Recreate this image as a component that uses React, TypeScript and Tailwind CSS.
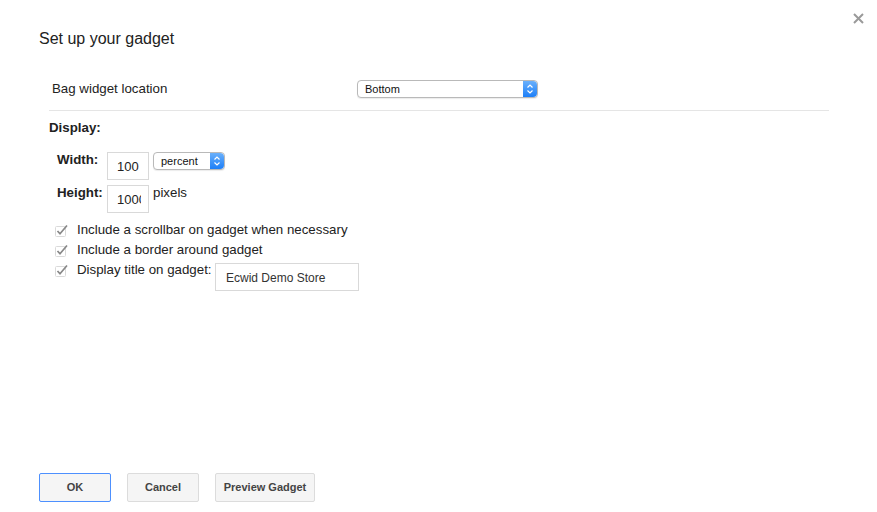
import React from "react";

function Stepper() {
  return (
    <div className="flex h-full w-[14px] items-center justify-center rounded-r-[4px] bg-[linear-gradient(#6ab0fb,#1d7ff8)]">
      <svg width="8" height="12" viewBox="0 0 8 12" aria-hidden="true">
        <path d="M1.5 4.5 L4 2 L6.5 4.5" fill="none" stroke="#fff" strokeWidth="1.2" />
        <path d="M1.5 7.5 L4 10 L6.5 7.5" fill="none" stroke="#fff" strokeWidth="1.2" />
      </svg>
    </div>
  );
}

function MacSelect({ value, width }: { value: string; width: string }) {
  return (
    <div
      className={`flex h-[18px] items-center rounded-[4px] border border-[#b9b9b9] bg-white shadow-[0_1px_1px_rgba(0,0,0,0.08)] ${width}`}
    >
      <span className="flex-1 pl-[7px] text-[11px] leading-none text-[#111]">{value}</span>
      <Stepper />
    </div>
  );
}

function Check() {
  return (
    <svg width="14" height="13" viewBox="0 0 14 13" aria-hidden="true" className="shrink-0">
      <rect x="0.5" y="2.5" width="10" height="10" rx="1" fill="#fff" stroke="#dadada" />
      <path d="M2.5 7 L5 9.8 L12 1.5" fill="none" stroke="#888" strokeWidth="1.7" />
    </svg>
  );
}

function Button({ label, primary, width }: { label: string; primary?: boolean; width: string }) {
  return (
    <button
      className={`h-[29px] rounded-[2px] border bg-[#f5f5f5] text-[11px] font-bold text-[#444] ${width} ${
        primary ? "border-[#4d90fe]" : "border-[#dcdcdc]"
      }`}
    >
      {label}
    </button>
  );
}

export default function App() {
  return (
    <div className="relative flex h-[512px] w-[877px] flex-col bg-white font-['Liberation_Sans',Arial,sans-serif] text-[#222]">
      {/* close */}
      <button className="absolute right-[13px] top-[13px]" aria-label="Close">
        <svg width="11" height="11" viewBox="0 0 11 11" aria-hidden="true">
          <path d="M1 1 L10 10 M10 1 L1 10" stroke="#9a9a9a" strokeWidth="2" />
        </svg>
      </button>

      <h1 className="pl-[39px] pt-[30px] text-[16px] leading-[18px] text-[#222]">Set up your gadget</h1>

      <div className="mt-[32px] flex h-[18px] items-center pl-[52px]">
        <span className="w-[305px] text-[13.3px] leading-[18px]">Bag widget location</span>
        <MacSelect value="Bottom" width="w-[181px]" />
      </div>

      <div className="ml-[49px] mt-[12px] h-px w-[780px] bg-[#e5e5e5]" />

      <div className="ml-[49px] mt-[9px] text-[13.3px] font-bold leading-[16px]">Display:</div>

      <div className="mt-[16px] flex items-start pl-[57px]">
        <span className="w-[50px] text-[13.3px] font-bold leading-[15px]">Width:</span>
        <div className="flex h-[28px] w-[42px] items-center border border-[#d9d9d9] pl-[9px] pt-[2px] text-[13px] text-[#222]">
          100
        </div>
        <div className="ml-[4px]">
          <MacSelect value="percent" width="w-[72px]" />
        </div>
      </div>

      <div className="mt-[5px] flex items-start pl-[57px]">
        <span className="w-[50px] text-[13.3px] font-bold leading-[15px]">Height:</span>
        <div className="flex h-[28px] w-[42px] items-center overflow-hidden whitespace-nowrap border border-[#d9d9d9] pl-[9px] pt-[2px] text-[13px] text-[#222]">
          <span className="w-[24px] overflow-hidden">1000</span>
        </div>
        <span className="ml-[4px] text-[13.3px] leading-[15px]">pixels</span>
      </div>

      <div className="mt-[7px] flex flex-col pl-[55px] text-[13.3px]">
        <label className="flex h-[20px] items-center gap-[8px]">
          <Check />
          <span>Include a scrollbar on gadget when necessary</span>
        </label>
        <label className="flex h-[20px] items-center gap-[8px]">
          <Check />
          <span>Include a border around gadget</span>
        </label>
        <div className="flex items-start">
          <label className="flex h-[20px] w-[160px] items-center gap-[8px]">
            <Check />
            <span className="whitespace-nowrap">Display title on gadget:</span>
          </label>
          <div className="mt-[3px] flex h-[28px] w-[144px] items-center border border-[#d9d9d9] pl-[10px] pt-[1px] text-[12px] text-[#333]">
            Ecwid Demo Store
          </div>
        </div>
      </div>

      <div className="mt-auto flex gap-[16px] pb-[10px] pl-[39px]">
        <Button label="OK" primary width="w-[72px]" />
        <Button label="Cancel" width="w-[72px]" />
        <Button label="Preview Gadget" width="w-[100px]" />
      </div>
    </div>
  );
}
